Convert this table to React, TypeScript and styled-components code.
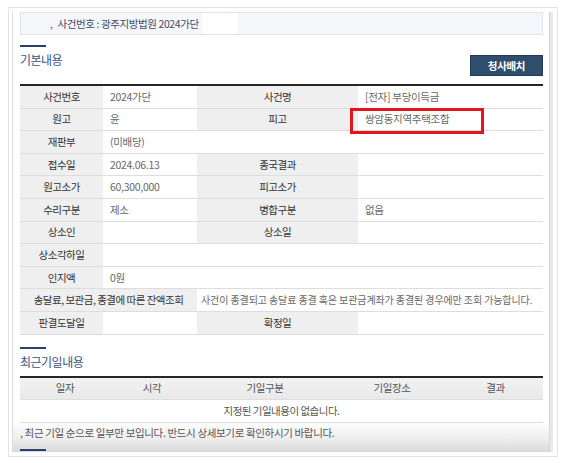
import React from "react";
import styled, { createGlobalStyle } from "styled-components";

const GlobalStyle = createGlobalStyle`
  html, body { margin: 0; padding: 0; background: #fff; }
  body { font-family: "Noto Sans CJK KR", "Noto Sans", sans-serif; }
`;

const Frame = styled.div`
  box-sizing: border-box;
  margin: 7px 0 0 8px;
  width: 550px;
  height: 450px;
  border: 1px solid #e3e3e3;
  padding: 4px 4px 4px 3px;
  background: #fff;
`;

const Panel = styled.div`
  box-sizing: border-box;
  height: 440px;
  overflow: hidden;
  border-left: 1px solid #dcdcdc;
  border-right: 3px solid #e8e8e8;
  box-shadow: inset -1px 0 0 #d6d6d6;
  padding: 0 7px 0 7px;
  background: linear-gradient(
    180deg,
    #ffffff 0,
    #ffffff 408px,
    #efefef 426px,
    #d9d9d9 440px
  );
`;

const CaseBar = styled.div`
  box-sizing: border-box;
  height: 23px;
  display: flex;
  align-items: center;
  padding-left: 29px;
  border: 1px solid #dfe3ea;
  background: #f4f6f9;
  font-size: 10.5px;
  letter-spacing: -0.4px;
  color: #3f4d66;
  white-space: nowrap;
`;

const Bullet = styled.span`
  margin-right: 5px;
  color: #55607a;
`;

const Redaction = styled.span`
  display: inline-block;
  width: 36px;
  height: 21px;
  margin-left: 3px;
  background: #ffffff;
`;

const SectionHead = styled.div<{ $gap: number }>`
  display: flex;
  justify-content: space-between;
  align-items: flex-end;
  margin-top: ${(p) => p.$gap}px;
`;

const Title = styled.h2`
  align-self: flex-start;
  margin: 0;
  font-size: 12px;
  font-weight: 400;
  line-height: 16px;
  letter-spacing: -0.5px;
  color: #3b5482;

  &::before {
    content: "";
    display: block;
    width: 26px;
    height: 2px;
    margin-bottom: 5px;
    background: #2c3f72;
  }
`;

const MapButton = styled.button`
  box-sizing: border-box;
  width: 73px;
  height: 21px;
  margin-top: 10px;
  padding: 0;
  border: 1px solid #223a55;
  background: #2f4d6c;
  color: #ffffff;
  font-family: inherit;
  font-size: 10.5px;
  font-weight: 700;
  letter-spacing: -0.3px;
  line-height: 19px;
  cursor: pointer;
`;

const DataTable = styled.table<{ $gap: number }>`
  width: 523px;
  table-layout: fixed;
  border-collapse: separate;
  border-spacing: 0;
  border-top: 2px solid #262626;
  margin-top: ${(p) => p.$gap}px;
`;

const Col = styled.col<{ $w: number }>`
  width: ${(p) => p.$w}px;
`;

const Label = styled.th`
  height: 21.6px;
  padding: 0 3px;
  background: #efefef;
  border-bottom: 1px solid #dddddd;
  font-weight: 400;
  font-size: 10.5px;
  line-height: 14px;
  letter-spacing: -0.5px;
  color: #333333;
  text-align: center;
  vertical-align: middle;
  white-space: nowrap;
`;

const Value = styled.td<{ $long?: boolean }>`
  position: relative;
  height: 21.6px;
  padding: 0 2px 0 ${(p) => (p.$long ? 4 : 7)}px;
  background: #ffffff;
  border-bottom: 1px solid #dddddd;
  font-size: ${(p) => (p.$long ? 10 : 10.5)}px;
  line-height: 14px;
  letter-spacing: ${(p) => (p.$long ? -0.1 : -0.3)}px;
  color: #686868;
  vertical-align: middle;
  white-space: nowrap;
`;

const Highlight = styled.span`
  position: absolute;
  z-index: 2;
  left: -8px;
  top: -1px;
  box-sizing: border-box;
  width: 134px;
  height: 26px;
  border: 3px solid #e3141b;
  pointer-events: none;
`;

const HeadCell = styled.th`
  height: 21.6px;
  padding: 0;
  background: linear-gradient(180deg, #f2f2f2, #e9e9e9);
  border-bottom: 1px solid #dddddd;
  font-weight: 400;
  font-size: 10.5px;
  line-height: 14px;
  letter-spacing: -0.4px;
  color: #555555;
  text-align: center;
  vertical-align: middle;
`;

const EmptyCell = styled.td`
  height: 21.6px;
  padding: 0;
  background: #ffffff;
  border-bottom: 1px solid #dddddd;
  font-size: 10.5px;
  line-height: 14px;
  letter-spacing: -0.5px;
  color: #555555;
  text-align: center;
  vertical-align: middle;
`;

const Note = styled.p`
  margin: 0;
  padding-top: 2px;
  font-size: 10.5px;
  line-height: 16px;
  letter-spacing: -0.35px;
  color: #555555;
  white-space: nowrap;
`;

const NextRule = styled.div`
  width: 26px;
  height: 2px;
  margin-top: 8px;
  background: #2c3f72;
`;

export default function App() {
  return (
    <>
      <GlobalStyle />
      <Frame>
        <Panel>
          <CaseBar>
            <Bullet>,</Bullet>
            사건번호 : 광주지방법원 2024가단
            <Redaction />
          </CaseBar>

          <SectionHead $gap={10}>
            <Title>기본내용</Title>
            <MapButton type="button">청사배치</MapButton>
          </SectionHead>

          <DataTable $gap={8}>
            <colgroup>
              <Col $w={83} />
              <Col $w={94} />
              <Col $w={161} />
              <Col $w={185} />
            </colgroup>
            <tbody>
              <tr>
                <Label>사건번호</Label>
                <Value>2024가단</Value>
                <Label>사건명</Label>
                <Value>[전자] 부당이득금</Value>
              </tr>
              <tr>
                <Label>원고</Label>
                <Value>윤</Value>
                <Label>피고</Label>
                <Value>
                  쌍암동지역주택조합
                  <Highlight />
                </Value>
              </tr>
              <tr>
                <Label>재판부</Label>
                <Value colSpan={3}>(미배당)</Value>
              </tr>
              <tr>
                <Label>접수일</Label>
                <Value>2024.06.13</Value>
                <Label>종국결과</Label>
                <Value />
              </tr>
              <tr>
                <Label>원고소가</Label>
                <Value>60,300,000</Value>
                <Label>피고소가</Label>
                <Value />
              </tr>
              <tr>
                <Label>수리구분</Label>
                <Value>제소</Value>
                <Label>병합구분</Label>
                <Value>없음</Value>
              </tr>
              <tr>
                <Label>상소인</Label>
                <Value />
                <Label>상소일</Label>
                <Value />
              </tr>
              <tr>
                <Label>상소각하일</Label>
                <Value colSpan={3} />
              </tr>
              <tr>
                <Label>인지액</Label>
                <Value colSpan={3}>0원</Value>
              </tr>
              <tr>
                <Label colSpan={2}>송달료, 보관금, 종결에 따른 잔액조회</Label>
                <Value colSpan={2} $long>
                  사건이 종결되고 송달료 종결 혹은 보관금계좌가 종결된 경우에만 조회 가능합니다.
                </Value>
              </tr>
              <tr>
                <Label>판결도달일</Label>
                <Value />
                <Label>확정일</Label>
                <Value />
              </tr>
            </tbody>
          </DataTable>

          <SectionHead $gap={12}>
            <Title>최근기일내용</Title>
          </SectionHead>

          <DataTable $gap={6}>
            <colgroup>
              <Col $w={90} />
              <Col $w={84} />
              <Col $w={142} />
              <Col $w={112} />
              <Col $w={95} />
            </colgroup>
            <thead>
              <tr>
                <HeadCell>일자</HeadCell>
                <HeadCell>시각</HeadCell>
                <HeadCell>기일구분</HeadCell>
                <HeadCell>기일장소</HeadCell>
                <HeadCell>결과</HeadCell>
              </tr>
            </thead>
            <tbody>
              <tr>
                <EmptyCell colSpan={5}>지정된 기일내용이 없습니다.</EmptyCell>
              </tr>
            </tbody>
          </DataTable>

          <Note>, 최근 기일 순으로 일부만 보입니다. 반드시 상세보기로 확인하시기 바랍니다.</Note>
          <NextRule />
        </Panel>
      </Frame>
    </>
  );
}
